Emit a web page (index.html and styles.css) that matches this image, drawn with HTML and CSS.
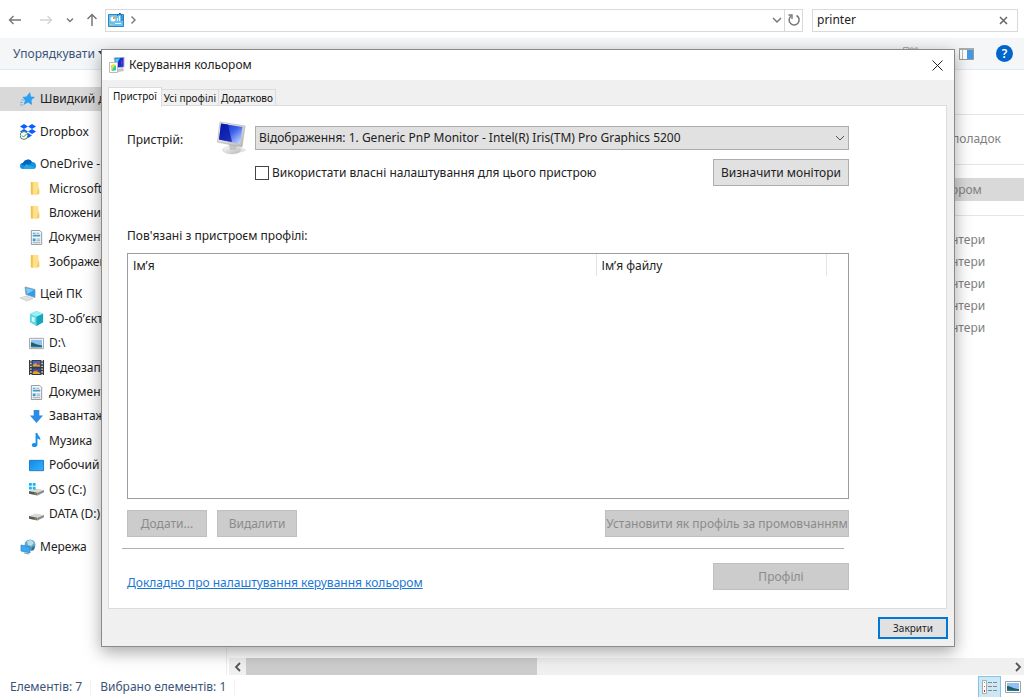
FILE: index.html
```html
<!DOCTYPE html>
<html lang="uk">
<head>
<meta charset="utf-8">
<title>Керування кольором</title>
<link rel="stylesheet" href="styles.css">
</head>
<body>
<svg class="defs" aria-hidden="true">
  <defs>
    <linearGradient id="screen" x1="0" y1="0" x2="1" y2="1"><stop offset="0" stop-color="#0822b8"/><stop offset=".5" stop-color="#3c62ea"/><stop offset="1" stop-color="#dce8ff"/></linearGradient>
    <linearGradient id="metal" x1="0" y1="0" x2="1" y2="1"><stop offset="0" stop-color="#ffffff"/><stop offset="1" stop-color="#b4b4b4"/></linearGradient>
    <linearGradient id="blue" x1="0" y1="0" x2="1" y2="1"><stop offset="0" stop-color="#1287e8"/><stop offset="1" stop-color="#35b3ff"/></linearGradient>
    <linearGradient id="rainbow" x1="0" y1="0" x2="1" y2="1"><stop offset="0" stop-color="#f33"/><stop offset=".35" stop-color="#fe3"/><stop offset=".6" stop-color="#3d6"/><stop offset=".8" stop-color="#2bf"/><stop offset="1" stop-color="#c3e"/></linearGradient>
    <symbol id="folder" viewBox="0 0 16 16"><path d="M2 1h8v2l1 10-3 2-6-1z" fill="#ffe08a"/><path d="M2 1h2v14l-2-1z" fill="#f0c14e"/><path d="M10 8h1v6H8z" fill="#f5cc62"/></symbol>
    <symbol id="doc" viewBox="0 0 16 16"><path d="M2.500.5h9l2 2v13h-11z" fill="#f5f7f8" stroke="#8e989e"/><path d="M4 3h3v1H4zM4 5h8v2H4zM4 9h3v3H4z" fill="#3a9bd2"/><path d="M8 3h3v1H8zM8 9h4v1H8zM8 11h4v1H8zM4 13h8v1H4z" fill="#9aa9b2"/></symbol>
    <symbol id="picture" viewBox="0 0 16 16"><path d="M.5 2.500h15v11H.5z" fill="#fff" stroke="#a2a2a2"/><path d="M2 4h12v8H2z" fill="#8fc3f7"/><path d="M2 7c4 0 6 3 12 3v2H2z" fill="#22605b"/><path d="M2 10.500l12 1v.5H2z" fill="#2a79a8"/></symbol>
    <symbol id="drive" viewBox="0 0 16 16"><path d="M0 9.500l7-2.500 9 1.500-7 3z" fill="#d9d9d9"/><path d="M0 9.500l9 2v3l-9-2z" fill="#5a5a5a"/><path d="M9 11.500l7-3v2.500l-7 3.500z" fill="#8b8b8b"/><path d="M6 12l2 .5v1L6 13z" fill="#74d83a"/></symbol>
  </defs>
</svg>
<div class="explorer">
  <header class="address-bar">
    <nav class="history">
      <button type="button" aria-label="Назад"><svg width="14" height="14" viewBox="0 0 14 14"><path d="M5.500 3L1.500 7l4 4M2 7h11" fill="none" stroke="#777" stroke-width="1.400"/></svg></button>
      <button type="button" aria-label="Вперед"><svg width="14" height="14" viewBox="0 0 14 14"><path d="M8.500 3l4 4-4 4M12 7H1" fill="none" stroke="#d4d4d4" stroke-width="1.400"/></svg></button>
      <button type="button" class="recent" aria-label="Останні"><svg width="8" height="8" viewBox="0 0 8 8"><path d="M1 2.500l3 3 3-3" fill="none" stroke="#777" stroke-width="1.400"/></svg></button>
      <button type="button" aria-label="Вгору"><svg width="14" height="14" viewBox="0 0 14 14"><path d="M2.500 6L7 1.500 11.500 6M7 2v11" fill="none" stroke="#777" stroke-width="1.500"/></svg></button>
    </nav>
    <div class="path">
      <svg width="16" height="14" viewBox="0 0 16 14"><path d="M.5 1.500h15v12H.5z" fill="#68c2f3" stroke="#2b83c4"/><circle cx="5" cy="6" r="2.500" fill="#fff"/><path d="M5 6V3.500A2.500 2.500 0 0 1 7.500 6z" fill="#f49a23"/><path d="M9 8V5h1v3zM11 8V3h1v5z" fill="#fff"/><path d="M9 3l3-3 2 3v5" fill="none" stroke="#1c67aa"/><path d="M2 11h3v1H2z" fill="#f2c13a"/><path d="M7 10h6v1H7z" fill="#fff"/></svg>
      <svg width="8" height="10" viewBox="0 0 8 10"><path d="M1.500 1.500L5 5 1.500 8.500" fill="none" stroke="#777" stroke-width="1.400"/></svg>
      <button type="button" class="path-drop" aria-label="Попередні розташування"><svg width="10" height="8" viewBox="0 0 10 8"><path d="M1 2l4 4 4-4" fill="none" stroke="#777" stroke-width="1.500"/></svg></button>
      <button type="button" class="refresh" aria-label="Оновити"><svg width="14" height="14" viewBox="0 0 14 14"><path d="M9.500 2.500A5 5 0 1 1 4 3" fill="none" stroke="#777" stroke-width="1.500"/><path d="M1.500 2H5v4" fill="none" stroke="#777" stroke-width="1.400"/></svg></button>
    </div>
    <div class="search">
      <input type="text" value="printer" aria-label="Пошук">
      <button type="button" aria-label="Очистити"><svg width="9" height="9" viewBox="0 0 9 9"><path d="M1 1l7 7M8 1L1 8" stroke="#666" stroke-width="1.500"/></svg></button>
    </div>
  </header>

  <div class="toolbar">
    <button type="button" class="organize">Упорядкувати <svg width="7" height="5" viewBox="0 0 7 5"><path d="M0 0h7L3.500 4z" fill="#1e395b"/></svg></button>
    <svg class="views" width="15" height="14" viewBox="0 0 15 14"><path d="M.5.5h5v4h-5zM7 1h3v2H7zM12 1h3v2h-3z" fill="#eee" stroke="#aaa"/></svg>
    <svg width="15" height="12" viewBox="0 0 15 12"><path d="M.5.5h14v11H.5z" fill="#fff" stroke="#9a9a9a"/><path d="M0 0h15v2H0z" fill="#aaa"/><path d="M3.500 2v9" stroke="#bbb"/><path d="M8 2h6v9H8z" fill="#3f9be8"/></svg>
    <button type="button" class="help" aria-label="Довідка">?</button>
  </div>

  <main class="body">
    <ul class="tree">
      <li class="root selected"><svg viewBox="0 0 16 16"><path d="M10 1l1 4.500 4 .5-3.500 3 .5 5-4-2.500L3.500 14 5 9.500 2.500 6l4-.5z" fill="#2c9ff0"/><path d="M1 9h3M0 11.500h3M0 14h3" stroke="#6cb6ee"/></svg>Швидкий д</li>
      <li class="root"><svg viewBox="0 0 16 16"><path d="M4 0l4 2.500L4 5 0 2.500zM12 0l4 2.500L12 5 8 2.500zM4 5l4 2.500L4 10 0 7.500zM12 5l4 2.500-4 2.500-4-2.500zM8 9l4 2.500L8 14l-4-2.500z" fill="#0b5cff"/><circle cx="4" cy="11.500" r="3.900" fill="#fff" stroke="#3b8a5c"/><path d="M2 11.500L3.500 13l3-3" fill="none" stroke="#3b8a5c"/></svg>Dropbox</li>
      <li class="root"><svg viewBox="0 0 16 16"><path d="M3 7a5 5 0 0 1 9-1 4 4 0 0 1 4 4c0 2-1 3-3 3H3a3 3 0 0 1 0-6z" fill="#1490df"/><path d="M3 7a5 5 0 0 1 9-1L7 11 1 8z" fill="#0364b8"/><path d="M6 8l9 4-2 1H3z" fill="#28a8ea"/></svg>OneDrive -</li>
      <li><svg><use href="#folder"/></svg>Microsoft</li>
      <li><svg><use href="#folder"/></svg>Вложения</li>
      <li><svg><use href="#doc"/></svg>Документи</li>
      <li><svg><use href="#folder"/></svg>Зображення</li>
      <li class="root"><svg viewBox="0 0 16 16"><path d="M5 1l10 2.500v8L6 8.500z" fill="#2ba0ee" stroke="#8b9399" stroke-width=".7"/><path d="M6 2l8 2-7 4z" fill="#7dcbfb"/><path d="M0 12l6-2 7 2.500L7 15z" fill="#dfe1e3" stroke="#b5b8bb" stroke-width=".5"/></svg>Цей ПК</li>
      <li><svg viewBox="0 0 16 16"><path d="M8 0l7 3v9l-7 4-7-4V3z" fill="#5fd6e4"/><path d="M1 3l7-3 7 3-7 3z" fill="#9beef5"/><path d="M8 6l7-3v9l-7 4z" fill="#17a5bd"/><path d="M3 6l3 1v5l-3-1z" fill="#d2fafc"/></svg>3D-об’єкти</li>
      <li><svg><use href="#picture"/></svg>D:\</li>
      <li><svg viewBox="0 0 16 16"><path d="M0 0h16v16H0z" fill="#3a3a3a"/><path d="M4 1h8v6H4z" fill="#3d67d8"/><path d="M4 9h8v6H4z" fill="#284fae"/><path d="M4 5l4-2 4 3v1H4zM4 13l3-2 5 3v1H4z" fill="#d8a72e"/><path d="M8 3h3v2H8zM6 10h3v2H6z" fill="#c2393b"/><path d="M2 0v16M14 0v16" stroke="#f0f0f0" stroke-width="1.500" stroke-dasharray="1.500 1.500"/></svg>Відеозаписи</li>
      <li><svg><use href="#doc"/></svg>Документи</li>
      <li><svg viewBox="0 0 16 16"><path d="M5 1h6v6h4l-7 8-7-8h4z" fill="#2f8ce6"/></svg>Завантаження</li>
      <li><svg viewBox="0 0 16 16"><path d="M7 0h2c0 3 4 4 3 8-1-2-2-2-3-2v6c0 2-1 3-3 3s-3-1-3-2c0-2 2-3 4-2z" fill="#1990ea"/></svg>Музика</li>
      <li><svg viewBox="0 0 16 16"><path d="M.5 2.500h15v11H.5z" fill="url(#blue)" stroke="#1879c8"/></svg>Робочий стіл</li>
      <li><svg viewBox="0 0 16 16"><use href="#drive"/><path d="M0 1h3v3H0zM4 1h3v3H4zM0 5h3v3H0zM4 5h3v3H4z" fill="#18b4f1"/></svg>OS (C:)</li>
      <li><svg><use href="#drive"/></svg>DATA (D:)</li>
      <li class="root"><svg viewBox="0 0 16 16"><circle cx="10" cy="6" r="5.500" fill="#64a9c6"/><path d="M7 2l4-1 3 3-3 3-3-1z" fill="#b9dce9"/><path d="M12 8l3-1-1 4-3 1z" fill="#396f92"/><path d="M1 6l9 2v6l-9-2z" fill="#38a9f7" stroke="#2474b4" stroke-width=".6"/><path d="M4 14l5 1" stroke="#999"/></svg>Мережа</li>
    </ul>
    <section class="content">
      <div class="results">
        <ul>
          <li class="group">поладок</li>
          <li class="group current"><span>ором</span></li>
          <li class="group rest">
            <a href="#">нтери</a><a href="#">нтери</a><a href="#">нтери</a><a href="#">нтери</a><a href="#">нтери</a>
          </li>
        </ul>
      </div>
      <div class="scrollbar">
        <button type="button" aria-label="Прокрутити ліворуч"><svg width="8" height="10" viewBox="0 0 8 10"><path d="M6 1L2 5l4 4" fill="none" stroke="#555" stroke-width="1.800"/></svg></button>
        <div class="track"><div class="thumb"></div></div>
        <button type="button" class="right" aria-label="Прокрутити праворуч"><svg width="8" height="10" viewBox="0 0 8 10"><path d="M2 1l4 4-4 4" fill="none" stroke="#555" stroke-width="1.800"/></svg></button>
      </div>
    </section>
  </main>

  <footer class="status">
    <span>Елементів: 7</span><span>Вибрано елементів: 1</span>
    <button type="button" class="view active" aria-label="Таблиця"><svg width="16" height="14" viewBox="0 0 16 14"><path d="M.5.5h4v13h-4z" fill="#fff" stroke="#aaa"/><path d="M2 2h1v1H2z" fill="#4a8"/><path d="M2 6h1v1H2z" fill="#c63"/><path d="M2 10h1v2H2z" fill="#c22"/><path d="M6 2.500h4M11 2.500h4M6 6.500h4M11 6.500h4M6 10.500h4M11 10.500h4" stroke="#888"/></svg></button>
    <button type="button" class="view" aria-label="Великі ескізи"><svg width="16" height="16"><use href="#picture"/></svg></button>
  </footer>
</div>

<div class="dialog" role="dialog" aria-labelledby="dialog-title">
  <div class="titlebar">
    <svg width="16" height="16" viewBox="0 0 16 16"><path d="M5 1l10-1v10l-8 1z" fill="#182fd0" stroke="#b8b8c8"/><path d="M6 2l5-1-4 7z" fill="#3adcf5"/><path d="M12 3l2 2-2 4z" fill="#7b2de0"/><path d="M9 12l5-1 1 3-6 1z" fill="#c4c4c4"/><path d="M.5 5.500h8v10h-8z" fill="#fff" stroke="#bbb"/><path d="M2 9l3-2 2 2v4l-3 1-2-1z" fill="url(#rainbow)"/></svg>
    <h1 id="dialog-title">Керування кольором</h1>
    <button type="button" aria-label="Закрити вікно"><svg width="11" height="11" viewBox="0 0 11 11"><path d="M.5.5l10 10M10.500.5l-10 10" stroke="#222"/></svg></button>
  </div>
  <div class="tabs" role="tablist">
    <button type="button" role="tab" aria-selected="true" class="on">Пристрої</button>
    <button type="button" role="tab">Усі профілі</button>
    <button type="button" role="tab">Додатково</button>
  </div>
  <div class="panel" role="tabpanel">
    <div class="device">
      <label for="device">Пристрій:</label>
      <svg width="30" height="34" viewBox="0 0 30 34"><ellipse cx="17" cy="29" rx="12" ry="3" fill="#e4e4e4"/><ellipse cx="15" cy="29" rx="9" ry="4" fill="url(#metal)" stroke="#ccc" stroke-width=".5"/><path d="M12 23l8 1-1 5h-6z" fill="#c4c4c4"/><path d="M3 1l25 4-3 21L.5 21z" fill="url(#metal)" stroke="#aaa" stroke-width=".6"/><path d="M4 2.500l21.500 3.500-2.500 17L2 18.500z" fill="url(#screen)"/><path d="M4 2.500l7 1 4 17.500-13-2.500z" fill="#0614a2" opacity=".75"/></svg>
      <div class="combo">
        <select id="device"><option>Відображення: 1. Generic PnP Monitor - Intel(R) Iris(TM) Pro Graphics 5200</option></select>
        <svg width="10" height="6" viewBox="0 0 10 6"><path d="M1 1l4 4 4-4" fill="none" stroke="#555"/></svg>
      </div>
    </div>
    <div class="own">
      <input type="checkbox" id="own"><label for="own">Використати власні налаштування для цього пристрою</label>
      <button type="button" class="btn wide">Визначити монітори</button>
    </div>
    <p class="caption">Пов'язані з пристроєм профілі:</p>
    <div class="list">
      <table>
        <thead><tr><th class="name">Ім’я</th><th class="file">Ім’я файлу</th><th></th></tr></thead>
      </table>
    </div>
    <div class="actions">
      <button type="button" class="btn" disabled>Додати...</button>
      <button type="button" class="btn" disabled>Видалити</button>
      <button type="button" class="btn default" disabled>Установити як профіль за промовчанням</button>
    </div>
    <hr>
    <div class="more">
      <a href="#">Докладно про налаштування керування кольором</a>
      <button type="button" class="btn wide" disabled>Профілі</button>
    </div>
  </div>
  <div class="footer"><button type="button" class="close">Закрити</button></div>
</div>
</body>
</html>
```
FILE: styles.css
```css
* { box-sizing: border-box; }
body { margin: 0; font: 12px/16px "Noto Sans", "Open Sans", sans-serif; color: #222; background: #fff; }
button, input, select { font: inherit; color: inherit; }
button { padding: 0; border: 0; background: none; }
ul { margin: 0; padding: 0; list-style: none; }
svg { display: block; flex: none; }
.defs { position: absolute; width: 0; height: 0; }

.explorer { display: flex; flex-direction: column; height: 100vh; min-height: 640px; overflow: hidden; }
.address-bar { display: flex; align-items: center; height: 38px; padding: 2px 6px 0 8px; }
.history { display: flex; align-items: center; gap: 17px; width: 97px; }
.history .recent { margin: 0 -6px 0 -4px; }
.path { display: flex; flex: 1; align-items: center; height: 23px; margin-right: 9px; padding-left: 2px; gap: 6px; border: 1px solid #d9d9d9; }
.path-drop { margin-left: auto; }
.refresh { display: grid; place-items: center; width: 18px; height: 100%; margin-left: -4px; border-left: 1px solid #d9d9d9; }
.search { display: flex; align-items: center; width: 206px; height: 23px; padding: 0 9px 0 4px; border: 1px solid #d9d9d9; }
.search input { flex: 1; min-width: 0; padding: 0; border: 0; outline: 0; background: none; }

.toolbar { display: flex; align-items: center; gap: 22px; flex: none; height: 32px; padding: 0 11px 0 13px; border-bottom: 1px solid #e5e8ec; background: #f5f6f8; }
.organize { display: flex; align-items: center; gap: 3px; color: #3b5478; }
.views { margin-left: auto; margin-right: 19px; }
.help { width: 17px; height: 17px; border-radius: 50%; background: #0066cc; color: #fff; font-weight: 600; line-height: 16px; }

.body { display: flex; flex: 1; min-height: 0; }
.tree { display: flex; flex-direction: column; width: 227px; padding: 17px 0 116px; border-right: 1px solid #eee; }
.tree li { display: flex; flex: 1; align-items: center; gap: 5px; padding-left: 29px; white-space: nowrap; }
.tree li svg { width: 15px; height: 15px; }
.tree .root { gap: 4px; padding-left: 20px; }
.tree .root svg { width: 16px; height: 16px; }
.tree li + .root { margin-top: 8px; }
.tree .selected { background: #d9d9d9; }

.content { display: flex; flex: 1; flex-direction: column; margin-left: 2px; min-width: 0; }
.results { flex: 1; color: #808080; }
.results ul { width: 73px; margin: 44px 0 0 auto; }
.group { padding: 16px 0; border-top: 1px solid #e5e5e5; }
.group:first-child { padding: 16px 3px 17px 1px; }
.group.current { padding: 13px 0 14px; }
.current span { display: block; line-height: 23px; background: #d9d9d9; }
.group.rest { padding: 13px 0; }
.rest a { display: block; color: inherit; line-height: 22px; text-decoration: none; }

.scrollbar { display: flex; height: 17px; background: #f0f0f0; }
.scrollbar button { display: grid; place-items: center; width: 17px; }
.scrollbar .right { width: 12px; }
.track { flex: 1; }
.thumb { width: 38%; height: 100%; background: #cdcdcd; }

.status { display: flex; align-items: center; flex: none; height: 22px; padding: 2px 0 0 10px; color: #3b5478; }
.status span { padding-right: 8px; margin-right: 9px; border-right: 1px solid #f2f2f2; }
.view { display: grid; place-items: center; width: 23px; height: 22px; }
.view.active { margin-left: auto; border: 1px solid #7fc6e8; background: #cce8f6; }

.dialog { position: absolute; inset: 49px 69px 50px 101px; display: flex; flex-direction: column; border: 1px solid #8a8a8a; background: #f0f0f0; box-shadow: 0 5px 16px rgba(0, 0, 0, .35); }
.titlebar { display: flex; align-items: center; gap: 4px; flex: none; height: 30px; padding: 0 11px 0 7px; background: #fff; }
.titlebar h1 { flex: 1; margin: 0; font-size: 12px; font-weight: 400; }
.tabs { display: flex; align-items: flex-end; flex: none; height: 26px; padding-left: 6px; font-size: 10px; line-height: 14px; color: #111; }
.tabs button { height: 17px; padding: 0 2px; border: 1px solid #dcdcdc; border-width: 1px 1px 0 0; }
.tabs .on { height: 20px; margin-bottom: -1px; padding: 0 4px 3px; border-width: 1px 1px 0; background: #fff; z-index: 1; }
.panel { flex: 1; margin: -1px 7px 0 6px; padding: 15px 97px 0 18px; border: 1px solid #dcdcdc; background: #fff; }
.device { display: flex; align-items: center; }
.device label { width: 90px; padding-top: 3px; }
.combo { position: relative; flex: 1; margin: 0 0 0 8px; }
.combo select { display: block; width: 100%; height: 24px; padding: 0 3px; appearance: none; border: 1px solid #adadad; border-radius: 0; background: #e1e1e1; }
.combo svg { position: absolute; right: 4px; top: 9px; }
.own { display: flex; align-items: center; margin: 4px 0 42px 128px; }
.own input { appearance: none; width: 14px; height: 14px; margin: 0 3px 0 0; border: 1px solid #444; background: #fff; }
.btn { height: 27px; width: 80px; border: 1px solid #adadad; background: #e1e1e1; white-space: nowrap; }
.btn:disabled { border-color: #bfbfbf; background: #ccc; color: #8b8b8b; }
.btn.wide { width: 136px; margin-left: auto; }
.caption { margin: 0 0 9px; }
.list { height: 246px; border: 1px solid #9a9ca6; }
table { width: 100%; border-collapse: collapse; table-layout: fixed; }
th { height: 22px; padding: 1px 5px 0; border-right: 1px solid #e5e5e5; font-weight: 400; text-align: left; }
th:last-child { border: 0; }
.name { width: 65%; }
.file { width: 32%; }
.actions { display: flex; gap: 10px; margin-top: 11px; }
.btn.default { width: 244px; margin-left: auto; }
hr { height: 1px; margin: 11px 5px 13px -5px; border: 0; background: #b0b0b0; }
.more { display: flex; align-items: center; }
.more a { padding-top: 13px; color: #1a78d6; }
.footer { display: flex; justify-content: flex-end; padding: 8px 6px 7px; }
.close { width: 70px; height: 22px; border: 2px solid #0078d7; background: #e1e1e1; font-size: 10px; }
```
